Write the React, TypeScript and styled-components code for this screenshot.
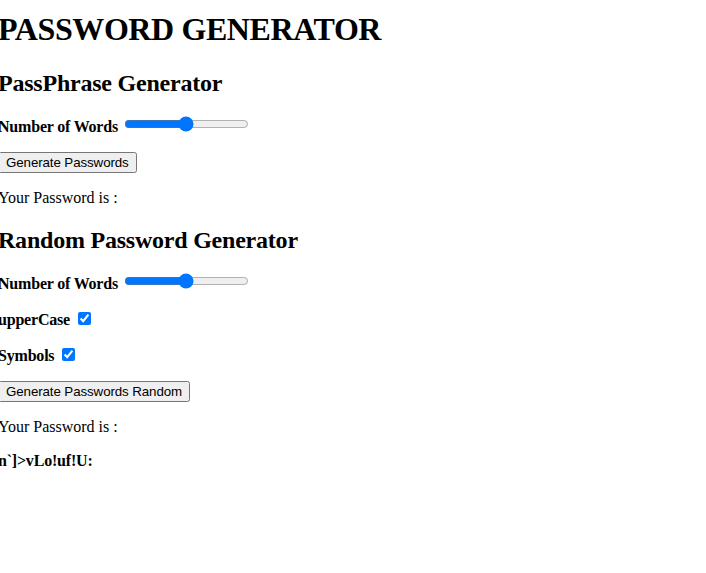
import React, { useState } from "react";
import styled, { createGlobalStyle } from "styled-components";

const GlobalStyle = createGlobalStyle`
  body {
    margin: 0;
    font-family: "Liberation Serif", "Times New Roman", serif;
    background: #fff;
    color: #000;
  }
`;

export default function App() {
  const [words, setWords] = useState(50);
  const [randomWords, setRandomWords] = useState(50);
  const [upperCase, setUpperCase] = useState(true);
  const [symbols, setSymbols] = useState(true);

  return (
    <Page>
      <GlobalStyle />
      <Title>PASSWORD GENERATOR</Title>

      <SectionTitle>PassPhrase Generator</SectionTitle>
      <Row>
        <Label>Number of Words</Label> <Range type="range" value={words} onChange={(e) => setWords(Number(e.target.value))} />
      </Row>
      <Row>
        <Button>Generate Passwords</Button>
      </Row>
      <Row>Your Password is :</Row>

      <SectionTitle>Random Password Generator</SectionTitle>
      <Row>
        <Label>Number of Words</Label> <Range type="range" value={randomWords} onChange={(e) => setRandomWords(Number(e.target.value))} />
      </Row>
      <Row>
        <Label>upperCase</Label> <Check type="checkbox" checked={upperCase} onChange={() => setUpperCase(!upperCase)} />
      </Row>
      <Row>
        <Label>Symbols</Label> <Check type="checkbox" checked={symbols} onChange={() => setSymbols(!symbols)} />
      </Row>
      <Row>
        <Button>Generate Passwords Random</Button>
      </Row>
      <Row>Your Password is :</Row>
      <Row>
        <Label>n`]&gt;vLo!uf!U:</Label>
      </Row>
    </Page>
  );
}

const Page = styled.div`
  margin-left: -2px;
`;

const Title = styled.h1`
  font-size: 32px;
  font-weight: bold;
  letter-spacing: -0.4px;
  margin: 11px 0 22px;
`;

const SectionTitle = styled.h2`
  font-size: 24px;
  font-weight: bold;
  letter-spacing: -0.22px;
  margin: 20px 0 19px;
`;

const Row = styled.p`
  font-size: 16px;
  margin: 16px 0;
`;

const Label = styled.label`
  font-weight: bold;
  letter-spacing: -0.2px;
`;

const Range = styled.input`
  margin: 0 2px;
  width: 125px;
`;

const Check = styled.input`
  margin: 3px 3px 2px 4px;
`;

const Button = styled.button`
  font-family: "Liberation Sans", Arial, sans-serif;
  font-size: 13.33px;
  letter-spacing: -0.1px;
`;
